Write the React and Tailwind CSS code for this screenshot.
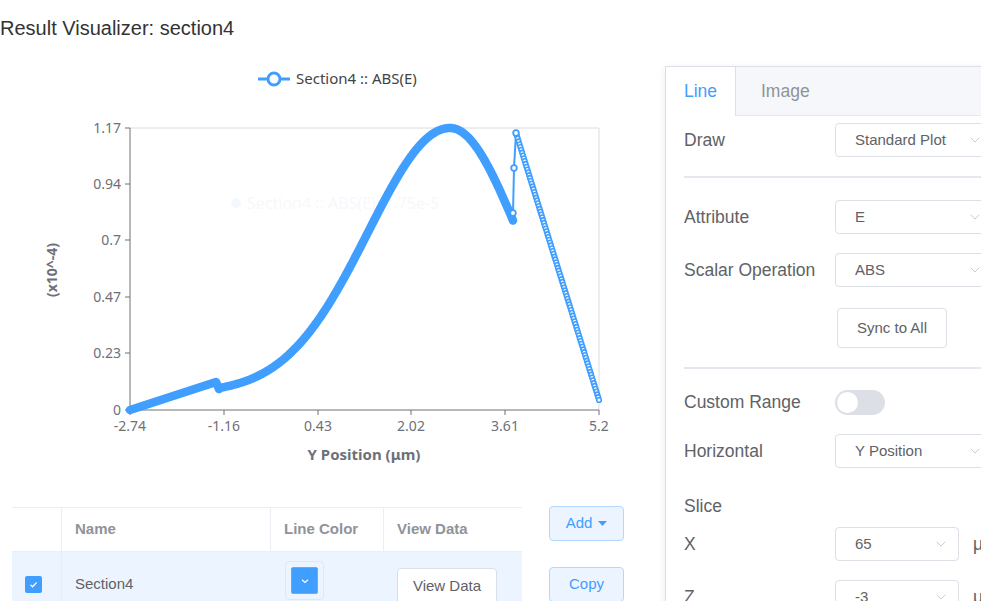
import { ChevronDown } from 'lucide-react'

const BLUE = '#409eff'

// plot box: x 130..599, y 128..410
const yTicks = [
  { v: '1.17', y: 128 },
  { v: '0.94', y: 184 },
  { v: '0.7', y: 240 },
  { v: '0.47', y: 297 },
  { v: '0.23', y: 353 },
  { v: '0', y: 410 },
]
const xTicks = [
  { v: '-2.74', x: 130 },
  { v: '-1.16', x: 224 },
  { v: '0.43', x: 318 },
  { v: '2.02', x: 411 },
  { v: '3.61', x: 505 },
  { v: '5.2', x: 599 },
]

function densePath() {
  const pts = ['M130 410', 'L216 382', 'L219 389']
  for (let x = 220; x <= 513; x++) {
    const d = x - 450
    const s = d < 0 ? 82 : 68
    const h = 17 + 265 * Math.exp(-(d * d) / (2 * s * s))
    pts.push(`L${x} ${(410 - h).toFixed(1)}`)
  }
  return pts.join(' ')
}

const sparse = Array.from({ length: 96 }, (_, i) => {
  const t = i / 95
  return { x: 516 + 83 * t, y: 133 + 267 * t }
})

function Chart() {
  return (
    <svg width="665" height="441" className="block" style={{ fontFamily: '"Noto Sans", sans-serif' }}>
      <g transform="translate(0,-66)">
        {/* legend */}
        <line x1="258" y1="79" x2="290" y2="79" stroke={BLUE} strokeWidth="3" />
        <circle cx="274" cy="79" r="6" fill="#fff" stroke={BLUE} strokeWidth="3" />
        <text x="296" y="84" fontSize="15" fill="#444">Section4 :: ABS(E)</text>

        {/* ghost tooltip */}
        <circle cx="236" cy="203" r="5" fill="#f4f7fb" />
        <text x="247" y="209" fontSize="16" fill="#f6f8fb">Section4 :: ABS(E): 7.75e-5</text>

        {/* plot frame */}
        <line x1="130" y1="128" x2="599" y2="128" stroke="#dcdcdc" />
        <line x1="599" y1="128" x2="599" y2="410" stroke="#dcdcdc" />
        <line x1="130" y1="128" x2="130" y2="410.5" stroke="#6e7079" />
        <line x1="130" y1="410" x2="599" y2="410" stroke="#6e7079" />

        {yTicks.map(t => (
          <g key={t.v}>
            <line x1="125" y1={t.y} x2="130" y2={t.y} stroke="#6e7079" />
            <text x="121" y={t.y + 5} fontSize="14" fill="#6e7079" textAnchor="end">{t.v}</text>
          </g>
        ))}
        {xTicks.map(t => (
          <g key={t.v}>
            <line x1={t.x} y1="410" x2={t.x} y2="415" stroke="#6e7079" />
            <text x={t.x} y="431" fontSize="14" fill="#6e7079" textAnchor="middle">{t.v}</text>
          </g>
        ))}

        <text x="364" y="460" fontSize="15" fontWeight="bold" fill="#6e7079" textAnchor="middle">Y Position (μm)</text>
        <text transform="translate(57 270) rotate(-90)" fontSize="14" fontWeight="bold" fill="#6e7079" textAnchor="middle">(x10^-4)</text>

        {/* series */}
        <path d={densePath()} fill="none" stroke={BLUE} strokeWidth="8.5" strokeLinejoin="round" strokeLinecap="round" />
        <polyline points="513,213 514,168 516,133 599,400" fill="none" stroke={BLUE} strokeWidth="2" />
        {sparse.map((p, i) => (
          <circle key={i} cx={p.x} cy={p.y} r="2.3" fill="#fff" stroke={BLUE} strokeWidth="1.6" />
        ))}
        <circle cx="513" cy="213" r="2.8" fill="#fff" stroke={BLUE} strokeWidth="1.8" />
        <circle cx="514" cy="168" r="2.8" fill="#fff" stroke={BLUE} strokeWidth="1.8" />
        <circle cx="516" cy="133" r="2.8" fill="#fff" stroke={BLUE} strokeWidth="1.8" />
      </g>
    </svg>
  )
}

function Select({ value, w = 'w-[158px]' }) {
  return (
    <div className={`${w} h-[34px] shrink-0 border border-[#dcdfe6] rounded-[4px] flex items-center justify-between pl-[19px] pr-[9px] text-[15px] text-[#606266]`}>
      <span>{value}</span>
      <ChevronDown size={16} strokeWidth={1.3} className="text-[#c0c4cc]" />
    </div>
  )
}

function Row({ label, children, className = '' }) {
  return (
    <div className={`flex items-center ${className}`}>
      <div className="w-[151px] shrink-0 text-[17.5px] text-[#606266]">{label}</div>
      {children}
    </div>
  )
}

function Panel() {
  return (
    <div className="w-[340px] shrink-0 h-[560px] border-l border-t border-[#dcdfe6] shadow-[0_2px_8px_rgba(0,0,0,0.08)] bg-white">
      <div className="h-[49px] flex bg-[#f5f7fa] border-b border-[#e4e7ed]">
        <div className="w-[70px] h-[49px] bg-white border-r border-[#dcdfe6] pl-[18px] flex items-center text-[17.5px] text-[#409eff]">Line</div>
        <div className="pl-[25px] flex items-center text-[17.5px] text-[#909399]">Image</div>
      </div>
      <div className="pl-[18px]">
        <Row label="Draw" className="mt-[7px]"><Select value="Standard Plot" /></Row>
        <div className="mt-[19px] h-[2px] bg-[#e4e7ed]" />
        <Row label="Attribute" className="mt-[22px]"><Select value="E" /></Row>
        <Row label="Scalar Operation" className="mt-[19px]"><Select value="ABS" /></Row>
        <div className="mt-[21px] ml-[153px] w-[110px] h-[40px] border border-[#dcdfe6] rounded-[4px] flex items-center justify-center text-[15px] text-[#606266]">Sync to All</div>
        <div className="mt-[19px] h-[2px] bg-[#e4e7ed]" />
        <Row label="Custom Range" className="mt-[21px] h-[25px]">
          <div className="w-[50px] h-[25px] rounded-full bg-[#dcdfe6] p-[2px]">
            <div className="w-[21px] h-[21px] rounded-full bg-white" />
          </div>
        </Row>
        <Row label="Horizontal" className="mt-[19px]"><Select value="Y Position" /></Row>
        <div className="mt-[26px] h-[24px] leading-[24px] text-[17.5px] text-[#606266]">Slice</div>
        <Row label="X" className="mt-[9px]">
          <Select value="65" w="w-[124px]" />
          <span className="ml-[14px] text-[17.5px] text-[#606266]">μm</span>
        </Row>
        <Row label="Z" className="mt-[19px]">
          <Select value="-3" w="w-[124px]" />
          <span className="ml-[14px] text-[17.5px] text-[#606266]">μm</span>
        </Row>
      </div>
    </div>
  )
}

function Table() {
  return (
    <div className="ml-[12px] w-[510px] border-t border-[#ebeef5] text-[15px]">
      <div className="flex h-[44px] border-b border-[#ebeef5] font-bold text-[#909399]">
        <div className="w-[50px] border-r border-[#ebeef5]" />
        <div className="w-[209px] border-r border-[#ebeef5] pl-[13px] flex items-center">Name</div>
        <div className="w-[113px] border-r border-[#ebeef5] pl-[13px] flex items-center">Line Color</div>
        <div className="flex-1 pl-[13px] flex items-center">View Data</div>
      </div>
      <div className="flex h-[64px] bg-[#ecf5ff] text-[#606266]">
        <div className="w-[50px] border-r border-[#e4eefa] flex items-center pl-[13px]">
          <div className="w-[17px] h-[17px] rounded-[2px] bg-[#409eff] flex items-center justify-center">
            <svg width="11" height="11" viewBox="0 0 11 11"><path d="M2.5 5.8 L4.6 7.8 L8.6 3.4" fill="none" stroke="#fff" strokeWidth="1.3" /></svg>
          </div>
        </div>
        <div className="w-[209px] pl-[13px] flex items-center">Section4</div>
        <div className="w-[113px] pl-[14px] pt-[9px]">
          <div className="w-[39px] h-[39px] border border-[#e6e6e6] rounded-[4px] p-[5px]">
            <div className="w-full h-full bg-[#409eff] border border-[#8aa4c0] rounded-[2px] flex items-center justify-center">
              <svg width="10" height="10" viewBox="0 0 10 10"><path d="M2 3.8 L5 6.5 L8 3.8" fill="none" stroke="#fff" strokeWidth="1.2" /></svg>
            </div>
          </div>
        </div>
        <div className="flex-1 pl-[13px] pt-[16px]">
          <div className="w-[100px] h-[36px] bg-white border border-[#dcdfe6] rounded-[4px] flex items-center justify-center">View Data</div>
        </div>
      </div>
    </div>
  )
}

export default function App() {
  return (
    <div className="w-[981px] h-[601px] overflow-hidden bg-white font-['Liberation_Sans',Arial,sans-serif]">
      <h1 className="pt-[15px] text-[20px] leading-[26px] text-[#333]">Result Visualizer: section4</h1>
      <div className="flex mt-[25px]">
        <div className="w-[665px] shrink-0">
          <Chart />
          <div className="flex">
            <Table />
            <div className="ml-[27px] -mt-[1px] flex flex-col gap-[26px]">
              <div className="w-[75px] h-[35px] bg-[#ecf5ff] border border-[#b3d8ff] rounded-[4px] text-[#409eff] text-[15px] flex items-center justify-center gap-[6px]">
                Add
                <svg width="9" height="6" viewBox="0 0 9 6"><path d="M0 0 L9 0 L4.5 5 Z" fill="#409eff" /></svg>
              </div>
              <div className="w-[75px] h-[35px] bg-[#ecf5ff] border border-[#b3d8ff] rounded-[4px] text-[#409eff] text-[15px] flex items-center justify-center">Copy</div>
            </div>
          </div>
        </div>
        <Panel />
      </div>
    </div>
  )
}
